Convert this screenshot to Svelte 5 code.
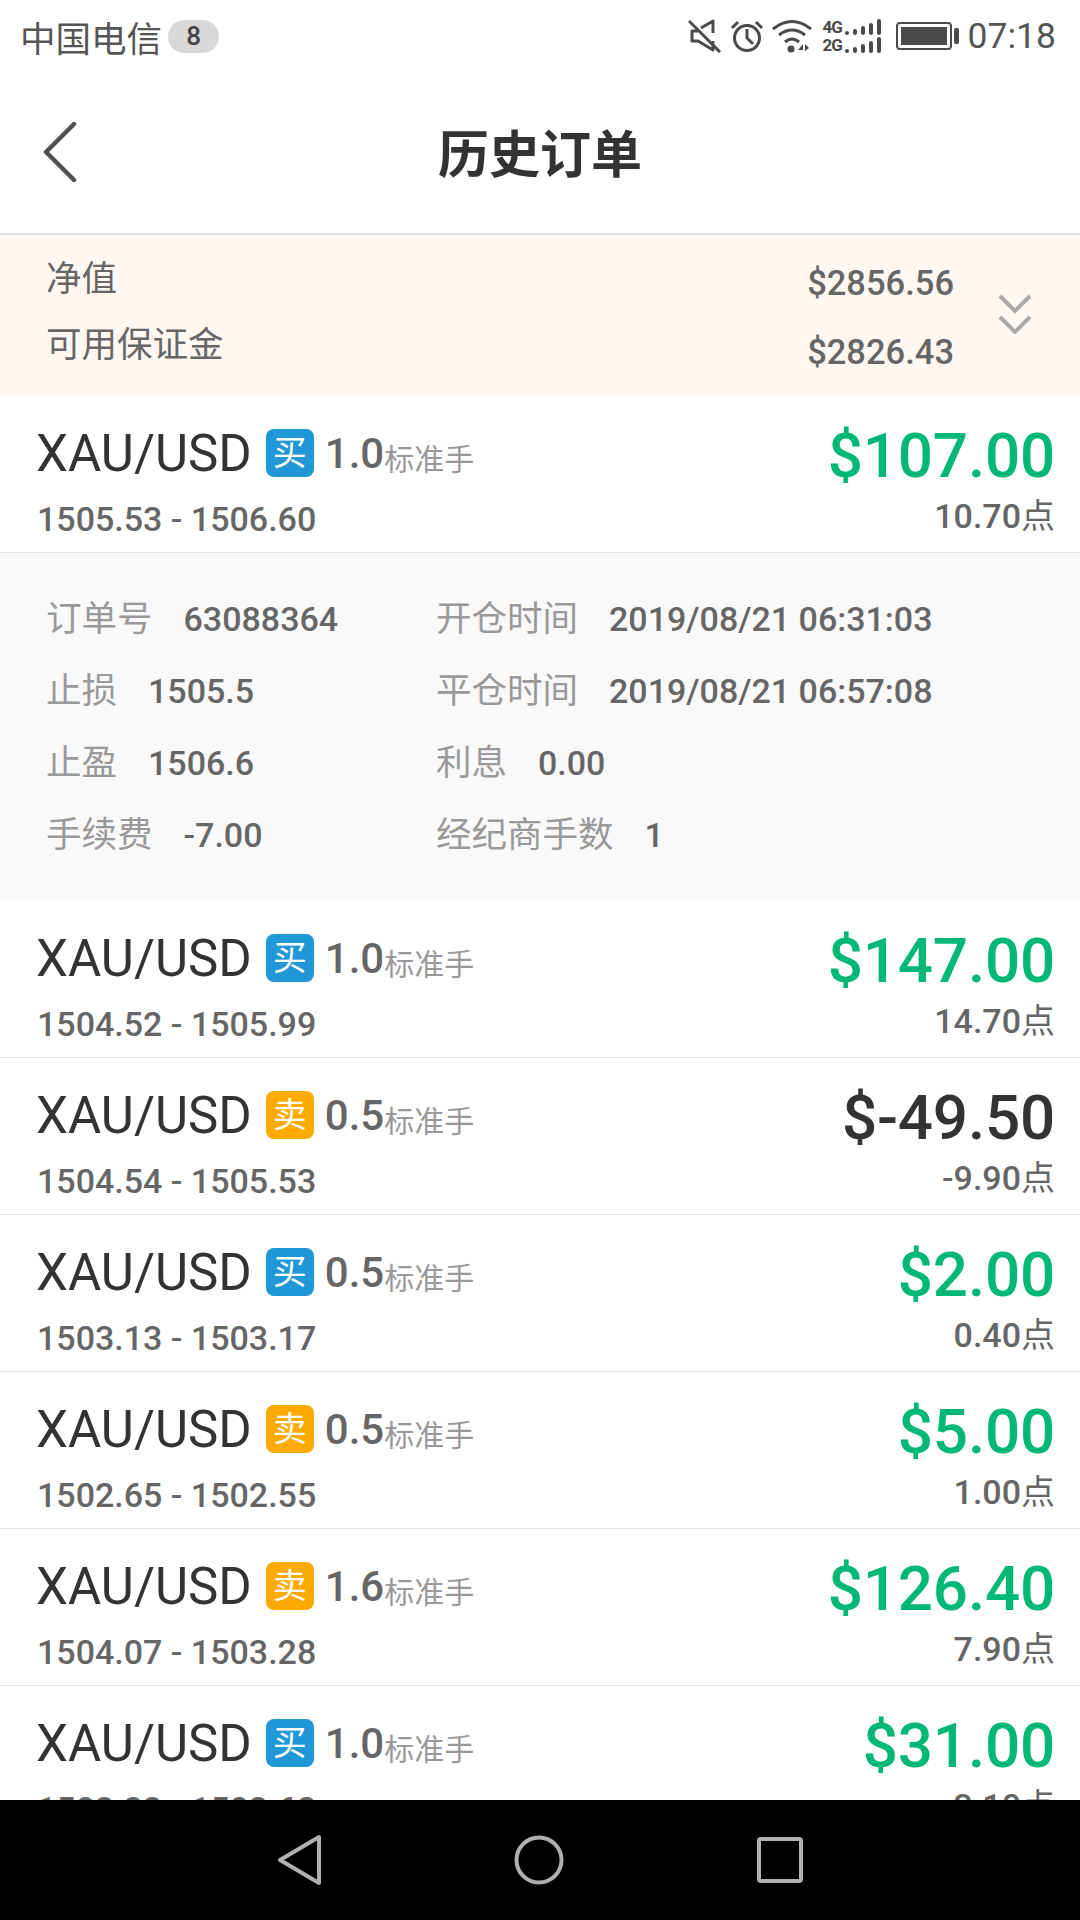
<script>
	const orders = [
		{ side: 'buy', lots: '1.0', range: '1505.53 - 1506.60', profit: '$107.00', points: '10.70', open: true },
		{ side: 'buy', lots: '1.0', range: '1504.52 - 1505.99', profit: '$147.00', points: '14.70' },
		{ side: 'sell', lots: '0.5', range: '1504.54 - 1505.53', profit: '$-49.50', points: '-9.90', loss: true },
		{ side: 'buy', lots: '0.5', range: '1503.13 - 1503.17', profit: '$2.00', points: '0.40' },
		{ side: 'sell', lots: '0.5', range: '1502.65 - 1502.55', profit: '$5.00', points: '1.00' },
		{ side: 'sell', lots: '1.6', range: '1504.07 - 1503.28', profit: '$126.40', points: '7.90' },
		{ side: 'buy', lots: '1.0', range: '1503.33 - 1503.62', profit: '$31.00', points: '3.10' }
	];

	const details = [
		['订单号', '63088364', '开仓时间', '2019/08/21 06:31:03'],
		['止损', '1505.5', '平仓时间', '2019/08/21 06:57:08'],
		['止盈', '1506.6', '利息', '0.00'],
		['手续费', '-7.00', '经纪商手数', '1']
	];
</script>

<div class="phone">
	<div class="status">
		<div class="carrier">
			<span>中国电信</span>
			<span class="count">8</span>
		</div>
		<div class="indicators">
			<svg width="34" height="34" viewBox="0 0 34 34" fill="none" stroke="#4a4a4a" stroke-width="3">
				<path d="M10 12H4v10h6l15 9V22 M13 9l12-7v12" stroke-linejoin="round" />
				<path d="M1 2l31 31" />
			</svg>
			<svg width="34" height="34" viewBox="0 0 34 34" fill="none" stroke="#4a4a4a" stroke-width="3">
				<circle cx="17" cy="19" r="12.5" />
				<path d="M17 10v9l6 6 M2 9l6-6 M32 9l-6-6" />
			</svg>
			<svg width="40" height="34" viewBox="0 0 40 34" fill="none" stroke="#4a4a4a" stroke-width="3">
				<path d="M1 10q19-15 38 0 M7 16q13-10 26 0 M13 23q7-6 14 0" />
				<circle cx="19" cy="30" r="3.5" fill="#4a4a4a" stroke="none" />
				<path d="M26 31l5-6v6z M33 25v7l4-3z" fill="#4a4a4a" stroke="none" />
			</svg>
			<div class="signal">
				{#each ['4G', '2G'] as net}
					<div class="signal-row">
						<span class="net">{net}</span>
						{#each [4, 6, 9, 12, 16] as h}
							<i style="height:{h}px"></i>
						{/each}
					</div>
				{/each}
			</div>
			<div class="battery"><div class="cell"></div></div>
			<div class="battery-tip"></div>
			<span class="clock">07:18</span>
		</div>
	</div>

	<header>
		<svg class="back" width="36" height="60" viewBox="0 0 36 60" fill="none" stroke="#4f4f4f" stroke-width="4.5" stroke-linecap="round" stroke-linejoin="round">
			<path d="M32 2L4 30l28 28" />
		</svg>
		<h1>历史订单</h1>
	</header>

	<section class="summary">
		<div class="labels">
			<span>净值</span>
			<span>可用保证金</span>
		</div>
		<div class="amounts">
			<span>$2856.56</span>
			<span>$2826.43</span>
		</div>
		<svg width="36" height="40" viewBox="0 0 36 40" fill="none" stroke="#aaa" stroke-width="4">
			<path d="M3 2l15 15 15-15 M3 23l15 15 15-15" />
		</svg>
	</section>

	<main>
		{#each orders as o}
			<article>
				<div class="left">
					<div class="title">
						<span class="pair">XAU/USD</span>
						<span class="tag {o.side}">{o.side === 'buy' ? '买' : '卖'}</span>
						<span class="lots">{o.lots}</span><span class="unit">标准手</span>
					</div>
					<div class="range">{o.range}</div>
				</div>
				<div class="right">
					<div class="profit" class:loss={o.loss}>{o.profit}</div>
					<div class="points">{o.points}<span>点</span></div>
				</div>
			</article>
			{#if o.open}
				<div class="details">
					{#each details as d}
						<div class="cell-l"><span>{d[0]}</span><b>{d[1]}</b></div>
						<div class="cell-r"><span>{d[2]}</span><b>{d[3]}</b></div>
					{/each}
				</div>
			{/if}
		{/each}
	</main>

	<nav>
		<svg width="44" height="52" viewBox="0 0 44 52" fill="none" stroke="#b0b0b0" stroke-width="4" stroke-linejoin="round">
			<path d="M42 3v46L3 26z" />
		</svg>
		<svg width="50" height="50" viewBox="0 0 50 50" fill="none" stroke="#b0b0b0" stroke-width="4">
			<circle cx="25" cy="25" r="22.5" />
		</svg>
		<svg width="46" height="46" viewBox="0 0 46 46" fill="none" stroke="#b0b0b0" stroke-width="4">
			<rect x="2" y="2" width="42" height="42" rx="2" />
		</svg>
	</nav>
</div>

<style>
	:global(body) {
		margin: 0;
	}

	.phone {
		width: 1080px;
		height: 1920px;
		display: flex;
		flex-direction: column;
		overflow: hidden;
		background: #fff;
		font-family: Roboto, 'Noto Sans CJK SC', sans-serif;
		color: #333;
	}

	.status {
		height: 72px;
		flex: none;
		display: flex;
		align-items: center;
		justify-content: space-between;
		padding: 0 24px 0 20px;
	}

	.carrier {
		display: flex;
		align-items: center;
		gap: 6px;
		font-size: 35.5px;
		color: #555;
	}

	.count {
		width: 51px;
		height: 33px;
		border-radius: 17px;
		background: #d8d8d8;
		color: #444;
		font-size: 26px;
		font-weight: 500;
		text-align: center;
		line-height: 33px;
	}

	.indicators {
		display: flex;
		align-items: center;
		gap: 8px;
	}

	.signal {
		display: flex;
		flex-direction: column;
		gap: 2px;
		margin-left: 3px;
	}

	.signal-row {
		height: 16px;
		display: flex;
		align-items: flex-end;
		gap: 4px;
	}

	.signal-row i {
		width: 4px;
		background: #4a4a4a;
		border-radius: 2px;
	}

	.net {
		font-size: 17px;
		line-height: 16px;
		font-weight: 700;
		color: #4a4a4a;
		width: 18px;
		letter-spacing: -1px;
	}

	.battery {
		width: 56px;
		height: 28px;
		box-sizing: border-box;
		border: 2px solid #4a4a4a;
		border-radius: 4px;
		padding: 3px;
		margin-left: 7px;
	}

	.cell {
		height: 100%;
		background: #4a4a4a;
	}

	.battery-tip {
		width: 5px;
		height: 16px;
		margin-left: -6px;
		background: #4a4a4a;
		border-radius: 2px;
	}

	.clock {
		font-size: 35.5px;
		color: #555;
		margin-left: 1px;
	}

	header {
		height: 163px;
		flex: none;
		position: relative;
		display: flex;
		align-items: center;
		justify-content: center;
		box-sizing: border-box;
		padding-bottom: 4px;
		border-bottom: 2px solid #dedde4;
	}

	.back {
		position: absolute;
		left: 42px;
		top: 50px;
	}

	h1 {
		margin: 0;
		font-size: 51px;
		font-weight: 700;
		color: #333;
	}

	.summary {
		height: 161px;
		flex: none;
		box-sizing: border-box;
		background: #fff8f2;
		display: flex;
		align-items: center;
		padding: 0 46px;
		color: #666;
	}

	.labels {
		display: flex;
		flex-direction: column;
		gap: 24px;
		font-size: 35.5px;
		line-height: 42px;
		flex: 1;
		margin-top: -8px;
	}

	.amounts {
		display: flex;
		flex-direction: column;
		gap: 27px;
		font-size: 34.5px;
		font-weight: 500;
		line-height: 42px;
		margin-top: 4px;
	}

	.summary svg {
		margin: -3px 1px 0 43px;
	}

	article {
		height: 157px;
		box-sizing: border-box;
		border-bottom: 1px solid #e6e6e6;
		display: flex;
		justify-content: space-between;
		padding: 0 25px 0 36px;
	}

	.title {
		display: flex;
		align-items: center;
		height: 66px;
		margin-top: 24px;
	}

	.pair {
		font-size: 51px;
		color: #333;
	}

	.tag {
		width: 48px;
		height: 48px;
		border-radius: 8px;
		margin: 0 11px 0 14px;
		color: #fff;
		text-align: center;
		font-size: 34px;
		line-height: 48px;
	}

	.buy {
		background: #2098d8;
	}

	.sell {
		background: #ffaa00;
	}

	.lots {
		font-size: 42px;
		font-weight: 500;
		color: #666;
	}

	.unit {
		font-size: 30px;
		color: #999;
		margin-top: 8px;
	}

	.range {
		font-size: 34px;
		font-weight: 500;
		color: #666;
		line-height: 42px;
		margin: 12px 0 0 1px;
	}

	.right {
		text-align: right;
	}

	.profit {
		font-size: 62px;
		font-weight: 500;
		color: #00b875;
		line-height: 72px;
		margin-top: 24px;
		letter-spacing: -0.2px;
	}

	.profit.loss {
		color: #333;
	}

	.points {
		font-size: 34px;
		font-weight: 500;
		color: #666;
		line-height: 42px;
		margin-top: 3px;
	}

	.points span {
		font-weight: 400;
	}

	.details {
		height: 348px;
		box-sizing: border-box;
		background: #f9f9f9;
		padding: 26px 46px 0;
		display: grid;
		grid-template-columns: 390px 1fr;
		grid-auto-rows: 72px;
		align-items: center;
	}

	.details span {
		font-size: 35.5px;
		color: #999;
		margin-right: 31px;
	}

	.details b {
		font-size: 34px;
		font-weight: 500;
		color: #666;
	}

	main {
		flex: 1;
		overflow: hidden;
	}

	nav {
		height: 120px;
		flex: none;
		background: #000;
		display: flex;
		align-items: center;
		justify-content: center;
		gap: 193px;
	}
</style>
